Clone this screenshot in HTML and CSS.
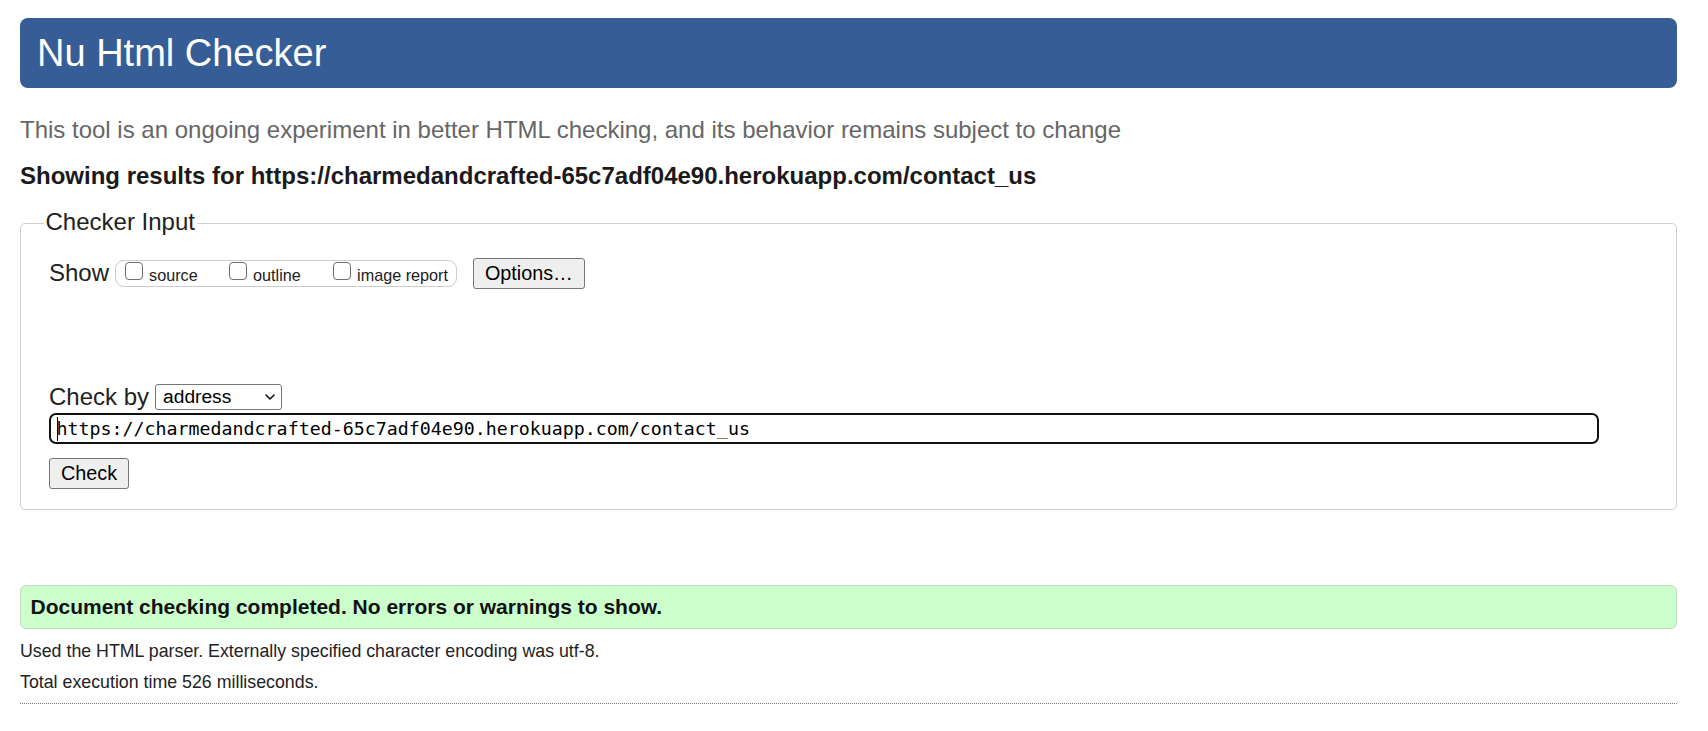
FILE: index.html
```html
<!DOCTYPE html>
<html lang="en">
<head>
<meta charset="utf-8">
<title>Showing results for https://charmedandcrafted-65c7adf04e90.herokuapp.com/contact_us - Nu Html Checker</title>
<link rel="stylesheet" href="styles.css">
</head>
<body>
<h1 class="title">Nu Html Checker</h1>
<p class="subtitle">This tool is an ongoing experiment in better HTML checking, and its behavior remains subject to change</p>
<p class="showing">Showing results for https://charmedandcrafted-65c7adf04e90.herokuapp.com/contact_us</p>
<form class="checker" onsubmit="return false">
  <fieldset class="inputs">
    <legend class="legend">Checker Input</legend>
    <div class="row">
      <span class="label">Show</span>
      <span class="pill">
        <label class="opt opt-fixed"><input class="box" type="checkbox"><span class="opt-text">source</span></label>
        <label class="opt opt-fixed"><input class="box" type="checkbox"><span class="opt-text">outline</span></label>
        <label class="opt"><input class="box" type="checkbox"><span class="opt-text">image report</span></label>
      </span>
      <button class="btn btn-options" type="button">Options…</button>
    </div>
    <div class="row row-by">
      <label class="label" for="docselect">Check by</label>
      <span class="select-wrap">
        <select class="select" id="docselect">
          <option>address</option>
          <option>file upload</option>
          <option>text input</option>
        </select>
        <svg class="chevron" width="10" height="6" viewBox="0 0 10 6" aria-hidden="true"><path d="M1 1 L5 5 L9 1" fill="none" stroke="#111" stroke-width="1.6" stroke-linecap="round" stroke-linejoin="round"/></svg>
      </span>
    </div>
    <div class="url-wrap">
      <input class="url" type="url" value="https://charmedandcrafted-65c7adf04e90.herokuapp.com/contact_us" readonly>
      <span class="caret"></span>
    </div>
    <div class="row row-submit">
      <button class="btn" type="button">Check</button>
    </div>
  </fieldset>
</form>
<div class="success">Document checking completed. No errors or warnings to show.</div>
<p class="meta">Used the HTML parser. Externally specified character encoding was utf-8.</p>
<p class="meta">Total execution time 526 milliseconds.</p>
<hr class="rule">
</body>
</html>
```
FILE: styles.css
```css
* {
  box-sizing: border-box;
}

html {
  background: #fff;
}

body {
  margin: 0;
  padding: 18px 31px 0 20px;
  font-family: "Liberation Sans", Arial, sans-serif;
  font-size: 17.8px;
  color: #222;
}

.title {
  margin: 0;
  height: 70px;
  padding: 15px 17px;
  background: #365d95;
  color: #fff;
  border-radius: 8px;
  font-size: 38px;
  line-height: 41px;
  font-weight: normal;
}

.subtitle {
  margin: 28.4px 0 0;
  font-size: 24px;
  line-height: 27px;
  color: #666;
}

.showing {
  margin: 18.8px 0 0;
  font-size: 24px;
  line-height: 27px;
  font-weight: bold;
  color: #1a1a1a;
}

.checker {
  margin: 18.8px 0 0;
}

.inputs {
  margin: 0;
  min-width: 0;
  padding: 19px 28px 20px 28px;
  border: 1px solid #d0d0d0;
  border-radius: 5px;
}

.legend {
  margin-left: -5.5px;
  padding: 0 2px 4px;
  font-size: 24px;
  line-height: 27px;
  color: #222;
}

.row {
  display: flex;
  align-items: center;
}

.label {
  font-size: 24px;
  line-height: 26px;
  color: #222;
}

.pill {
  display: inline-flex;
  align-items: flex-end;
  height: 27px;
  margin-left: 6px;
  padding: 0 8px 0 9px;
  border: 1px solid #cccccc;
  border-radius: 9px;
}

.opt {
  display: flex;
  align-items: flex-end;
  height: 100%;
}

.opt-fixed {
  width: 104px;
}

.box {
  appearance: none;
  -webkit-appearance: none;
  display: block;
  flex: none;
  width: 18px;
  min-width: 18px;
  height: 18px;
  margin: 0 6px 6px 0;
  border: 1.5px solid #6e6e6e;
  border-radius: 4px;
  background: #fff;
}

.opt-text {
  font-size: 16.2px;
  line-height: 18px;
  padding-bottom: 1.5px;
  color: #222;
}

.btn {
  height: 31px;
  padding: 0 11px;
  font-family: "Liberation Sans", Arial, sans-serif;
  font-size: 19.8px;
  line-height: 29px;
  color: #000;
  background: #efefef;
  border: 1px solid #767676;
  border-radius: 3px;
}

.btn-options {
  margin-left: 16px;
}

.row-by {
  margin-top: 95px;
}

.select-wrap {
  position: relative;
  display: block;
  margin-left: 6px;
}

.select {
  appearance: none;
  -webkit-appearance: none;
  display: block;
  width: 127px;
  height: 26px;
  padding: 0 0 0 7px;
  border: 1px solid #767676;
  border-radius: 3px;
  background: #fff;
  font-family: "Liberation Sans", Arial, sans-serif;
  font-size: 19.2px;
  line-height: 24px;
  color: #000;
}

.chevron {
  position: absolute;
  right: 7px;
  top: 10px;
  pointer-events: none;
}

.url-wrap {
  position: relative;
  width: 1550px;
  margin-top: 3px;
}

.url {
  display: block;
  width: 100%;
  height: 31px;
  padding: 0 0 0 5.5px;
  border: 2px solid #111;
  border-radius: 7px;
  outline: none;
  background: #fff;
  font-family: "DejaVu Sans Mono", "Liberation Mono", monospace;
  font-size: 18.3px;
  color: #000;
}

.caret {
  position: absolute;
  left: 8px;
  top: 4px;
  width: 1px;
  height: 24px;
  background: #000;
}

.row-submit {
  margin-top: 14px;
}

.success {
  margin-top: 75px;
  padding: 9px 9.5px;
  border: 1px solid #bfdcbf;
  border-radius: 6px;
  background: #ccffcc;
  font-size: 21px;
  line-height: 24px;
  font-weight: bold;
  color: #111;
}

.meta {
  margin: 11.7px 0 0;
  font-size: 17.8px;
  line-height: 20px;
  color: #222;
}

.meta + .meta {
  margin-top: 11.5px;
}

.rule {
  height: 0;
  margin: 11.3px 0 0;
  border: 0;
  border-top: 1px dotted #777;
}
```
